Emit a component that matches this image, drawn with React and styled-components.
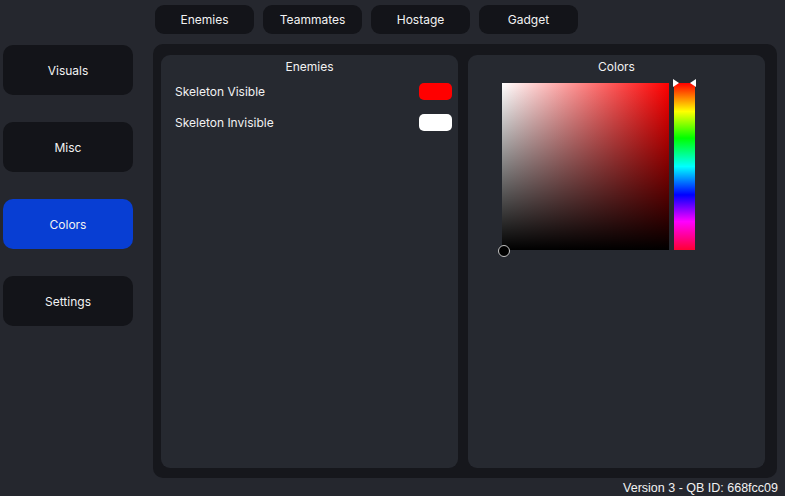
import React, { useState } from 'react';
import styled, { createGlobalStyle } from 'styled-components';

const tabs = ['Enemies', 'Teammates', 'Hostage', 'Gadget'];
const sections = ['Visuals', 'Misc', 'Colors', 'Settings'];
const entries = [
  { name: 'Skeleton Visible', color: '#ff0000' },
  { name: 'Skeleton Invisible', color: '#ffffff' },
];

export default function App() {
  const [tab, setTab] = useState('Enemies');
  const [section, setSection] = useState('Colors');

  return (
    <>
      <GlobalStyle />
      <Page>
        <TopBar>
          {tabs.map(t => (
            <Tab key={t} onClick={() => setTab(t)}>
              {t}
            </Tab>
          ))}
        </TopBar>
        <Body>
          <Sidebar>
            {sections.map(s => (
              <SideButton key={s} active={s === section} onClick={() => setSection(s)}>
                {s}
              </SideButton>
            ))}
          </Sidebar>
          <Main>
            <Card>
              <CardTitle>{tab}</CardTitle>
              <List>
                {entries.map(({ name, color }) => (
                  <Row key={name}>
                    <Label>{name}</Label>
                    <Swatch color={color} />
                  </Row>
                ))}
              </List>
            </Card>
            <Card>
              <CardTitle>Colors</CardTitle>
              <Picker>
                <SatBox>
                  <SatHandle />
                </SatBox>
                <HueBar>
                  <HueArrow side="left" width="6" height="8" viewBox="0 0 6 8">
                    <path d="M0 0 L6 4 L0 8 Z" fill="#fff" />
                  </HueArrow>
                  <HueArrow side="right" width="6" height="8" viewBox="0 0 6 8">
                    <path d="M6 0 L0 4 L6 8 Z" fill="#fff" />
                  </HueArrow>
                </HueBar>
              </Picker>
            </Card>
          </Main>
        </Body>
        <Footer>Version 3 - QB ID: 668fcc09</Footer>
      </Page>
    </>
  );
}

const GlobalStyle = createGlobalStyle`
  html, body {
    margin: 0;
    padding: 0;
    background: #25272e;
  }
  body {
    font-family: Inter, "Noto Sans", "DejaVu Sans", sans-serif;
    font-size: 12px;
    color: #f2f2f2;
  }
`;

const Page = styled.div`
  width: 785px;
  height: 496px;
  display: flex;
  flex-direction: column;
  overflow: hidden;
  background: #25272e;
`;

const TopBar = styled.div`
  display: flex;
  gap: 9px;
  padding: 5px 0 0 155px;
  height: 29px;
`;
const Tab = styled.div`
  width: 99px;
  height: 29px;
  display: flex;
  align-items: center;
  justify-content: center;
  background: #131419;
  border-radius: 9px;
  cursor: pointer;
`;

const Body = styled.div`
  display: flex;
  margin-top: 10px;
`;
const Sidebar = styled.div`
  width: 130px;
  margin-left: 3px;
  padding-top: 1px;
  display: flex;
  flex-direction: column;
  gap: 27px;
`;
const SideButton = styled.div`
  height: 50px;
  display: flex;
  align-items: center;
  justify-content: center;
  border-radius: 10px;
  background: ${p => (p.active ? '#083ed3' : '#131419')};
  cursor: pointer;
`;

const Main = styled.div`
  margin-left: 20px;
  width: 624px;
  height: 434px;
  box-sizing: border-box;
  padding: 11px 12px 10px 8px;
  background: #16171c;
  border-radius: 10px;
  display: flex;
  gap: 10px;
`;
const Card = styled.div`
  flex: 1;
  background: #262930;
  border-radius: 9px;
  display: flex;
  flex-direction: column;
  align-items: stretch;
`;
const CardTitle = styled.div`
  text-align: center;
  padding-top: 5px;
  line-height: 14px;
`;
const List = styled.div`
  display: flex;
  flex-direction: column;
  gap: 14px;
  padding: 9px 6px 0 14px;
`;
const Row = styled.div`
  display: flex;
  align-items: center;
  justify-content: space-between;
  height: 17px;
`;
const Label = styled.span``;
const Swatch = styled.div`
  width: 33px;
  height: 17px;
  border-radius: 5px;
  background: ${p => p.color};
`;

const Picker = styled.div`
  display: flex;
  gap: 5px;
  padding: 9px 0 0 34px;
`;
const SatBox = styled.div`
  position: relative;
  width: 167px;
  height: 167px;
  background: linear-gradient(to top, #000, rgba(0, 0, 0, 0)),
    linear-gradient(to right, #fff, #ff0000);
`;
const SatHandle = styled.div`
  position: absolute;
  left: -4px;
  bottom: -7px;
  width: 10px;
  height: 10px;
  border-radius: 50%;
  background: #000;
  border: 1.5px solid #c4c4c4;
`;
const HueBar = styled.div`
  position: relative;
  width: 21px;
  height: 167px;
  background: linear-gradient(
    to bottom,
    #ff0000 0%,
    #ffff00 17%,
    #00ff00 33%,
    #00ffff 50%,
    #0000ff 67%,
    #ff00ff 83%,
    #ff0033 100%
  );
`;
const HueArrow = styled.svg`
  position: absolute;
  top: -4px;
  ${p => (p.side === 'left' ? 'left: -1px;' : 'right: -1px;')}
`;

const Footer = styled.div`
  display: flex;
  justify-content: flex-end;
  padding: 3px 7px 0 0;
  font-family: "Liberation Sans", Arial, sans-serif;
  font-size: 12.5px;
`;
